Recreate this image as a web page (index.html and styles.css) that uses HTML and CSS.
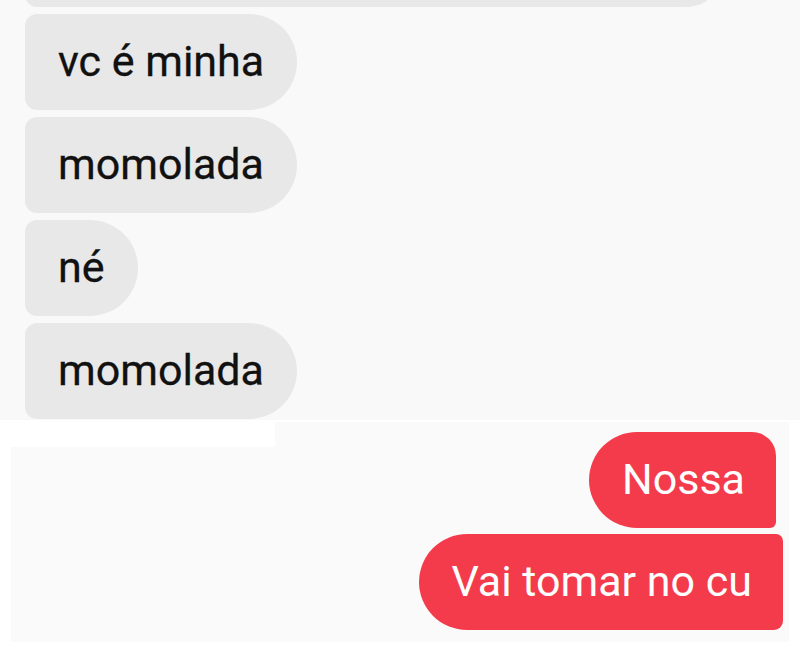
FILE: index.html
```html
<!DOCTYPE html>
<html lang="pt">
<head>
<meta charset="utf-8">
<link rel="stylesheet" href="styles.css">
</head>
<body>
<section class="received">
  <div class="bubble-in bubble-cut"></div>
  <div class="bubble-in">vc é minha</div>
  <div class="bubble-in">momolada</div>
  <div class="bubble-in">né</div>
  <div class="bubble-in">momolada</div>
</section>
<section class="sent">
  <div class="bubble-out bubble-first">Nossa</div>
  <div class="bubble-out bubble-last">Vai tomar no cu</div>
</section>
</body>
</html>
```
FILE: styles.css
```css
html, body {
  margin: 0;
  padding: 0;
  background: #ffffff;
}
body {
  width: 800px;
  height: 670px;
  overflow: hidden;
  font-family: Roboto, "Noto Sans", sans-serif;
}
.received {
  height: 420px;
  background: #f9f9f9;
  padding-left: 25px;
  display: flex;
  flex-direction: column;
  align-items: flex-start;
  gap: 7px;
  overflow: hidden;
}
.bubble-in {
  height: 96px;
  line-height: 94px;
  padding: 0 33px;
  font-size: 43px;
  color: #111111;
  background: #e8e8e8;
  border-radius: 12px 48px 48px 12px;
  white-space: nowrap;
  -webkit-text-stroke: 0.3px #111111;
}
.bubble-cut {
  width: 690px;
  padding: 0;
  margin-top: -89px;
  border-radius: 12px 48px 30px 12px / 12px 48px 20px 12px;
}
.sent {
  margin: 2px 0 0 11px;
  width: 778px;
  height: 220px;
  box-sizing: border-box;
  background: linear-gradient(#ffffff, #ffffff) no-repeat 0 0 / 264px 25px, #fafafa;
  padding-top: 10px;
  display: flex;
  flex-direction: column;
  align-items: flex-end;
  gap: 6px;
}
.bubble-out {
  height: 96px;
  line-height: 94px;
  padding: 0 31px;
  font-size: 43px;
  color: #ffffff;
  background: #f43b4c;
  white-space: nowrap;
}
.bubble-first {
  margin-right: 13px;
  border-radius: 48px 24px 6px 48px;
  padding: 0 31px 0 33px;
}
.bubble-last {
  margin-right: 6px;
  border-radius: 48px 7px 9px 48px;
  padding: 0 31px 0 32px;
}
```
